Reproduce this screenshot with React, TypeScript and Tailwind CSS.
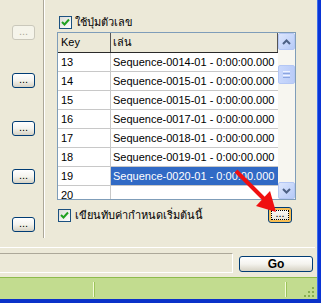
import React from 'react';

function DotsButton({ disabled }: { disabled?: boolean }) {
  return (
    <div
      className={`w-[23px] h-[15px] rounded-[3px] border flex items-end justify-center pb-[2px] text-[11px] leading-none ${
        disabled
          ? 'border-[#CAC8BB] text-[#ACA899] bg-[#F5F4EA]'
          : 'border-[#003C74] text-black bg-linear-to-b from-white via-[#F4F3EE] to-[#D6D2C4]'
      }`}
    >
      ...
    </div>
  );
}

function Check() {
  return (
    <div className="w-[13px] h-[13px] shrink-0 border border-[#1C5180] bg-linear-to-br from-[#DCDCD7] to-white flex items-center justify-center">
      <svg width="9" height="9" viewBox="0 0 9 9">
        <path d="M1 4 L3.5 6.5 L8 1.5" stroke="#21A121" strokeWidth="2" fill="none" />
      </svg>
    </div>
  );
}

function ScrollBtn({ up }: { up?: boolean }) {
  return (
    <div className="w-[17px] h-[17px] shrink-0 rounded-[2px] border border-[#B4C7F4] bg-linear-to-br from-[#DCE6FD] to-[#B6CAF7] flex items-center justify-center">
      <svg width="9" height="6" viewBox="0 0 9 6">
        <path d={up ? 'M1 5 L4.5 1.5 L8 5' : 'M1 1 L4.5 4.5 L8 1'} stroke="#4D6185" strokeWidth="2" fill="none" />
      </svg>
    </div>
  );
}

const rows = [
  { k: '13', v: 'Sequence-0014-01 - 0:00:00.000' },
  { k: '14', v: 'Sequence-0015-01 - 0:00:00.000' },
  { k: '15', v: 'Sequence-0015-01 - 0:00:00.000' },
  { k: '16', v: 'Sequence-0017-01 - 0:00:00.000' },
  { k: '17', v: 'Sequence-0018-01 - 0:00:00.000' },
  { k: '18', v: 'Sequence-0019-01 - 0:00:00.000' },
  { k: '19', v: 'Sequence-0020-01 - 0:00:00.000', sel: true },
  { k: '20', v: '' },
];

export default function App() {
  return (
    <div className="relative w-[321px] h-[303px] overflow-hidden bg-[#ECE9D8] text-[11px] text-black font-['Liberation_Sans','DejaVu_Sans',sans-serif] flex flex-col">
      <div className="flex flex-row h-[299px]">
        {/* main content */}
        <div className="w-[317px] flex flex-col">
          {/* top section */}
          <div className="h-[247px] flex flex-row">
            <div className="w-[43px] pl-[12px] pt-[25px] flex flex-col gap-[33px]">
              <DotsButton disabled />
              <DotsButton />
              <DotsButton />
              <DotsButton />
              <DotsButton />
            </div>
            <div className="w-[2px] h-[238px] border-l border-[#ACA899] bg-white" />
            <div className="flex-1 flex flex-col">
              <div className="pl-[14px] pt-[16px] flex items-center gap-[3px] h-[29px]">
                <Check />
                <span className="leading-none">ใช้ปุ่มตัวเลข</span>
              </div>
              <div className="ml-[12px] mt-[3px] w-[239px] h-[168px] border border-[#7F9DB9] bg-white flex flex-row">
                <div className="w-[220px] flex flex-col overflow-hidden">
                  <div className="h-[20px] shrink-0 flex flex-row bg-[#ECE9D8] border-b border-[#2A2A2A]">
                    <div className="w-[53px] border-r border-[#555] pl-[3px] flex items-center">Key</div>
                    <div className="flex-1 pl-[2px] flex items-center border-r border-[#555]">เล่น</div>
                  </div>
                  {rows.map((r) => (
                    <div key={r.k} className="h-[19px] shrink-0 flex flex-row border-b border-[#C8C8C8]">
                      <div className="w-[53px] border-r border-[#C8C8C8] pl-[3px] flex items-center">{r.k}</div>
                      <div
                        className={`flex-1 pl-[2px] flex items-center whitespace-nowrap ${
                          r.sel ? 'bg-[#316AC5] text-white' : ''
                        }`}
                      >
                        {r.v}
                      </div>
                    </div>
                  ))}
                </div>
                <div className="w-[17px] flex flex-col bg-[#F7F6F0]">
                  <ScrollBtn up />
                  <div className="flex-1 pt-[15px]">
                    <div className="h-[19px] rounded-[2px] border border-[#B4C7F4] bg-linear-to-r from-[#C9D8FC] to-[#BACCF8] flex flex-col items-center justify-center gap-[1px]">
                      <div className="w-[7px] h-px bg-[#EEF3FE]" />
                      <div className="w-[7px] h-px bg-[#8CA6E0]" />
                      <div className="w-[7px] h-px bg-[#EEF3FE]" />
                      <div className="w-[7px] h-px bg-[#8CA6E0]" />
                    </div>
                  </div>
                  <ScrollBtn />
                </div>
              </div>
              <div className="mt-[7px] pl-[13px] flex flex-row items-center h-[16px]">
                <Check />
                <span className="ml-[4px] leading-none">เขียนทับค่ากำหนดเริ่มต้นนี้</span>
                <div className="ml-auto mr-[25px] w-[24px] h-[16px] rounded-[3px] border border-[#003C74] bg-linear-to-b from-white to-[#E3E0D3] shadow-[inset_0_0_0_2px_#F6BE55] p-[2px]">
                  <div className="w-full h-full border border-dotted border-black flex items-end justify-center leading-none text-[11px]">
                    ...
                  </div>
                </div>
              </div>
            </div>
          </div>
          <div className="h-px bg-white mr-[2px]" />
          <div className="h-[5px]" />
          <div className="h-[20px] flex flex-row">
            <div className="w-[233px] h-[20px] border-t border-[#ACA899] border-r border-b border-r-white border-b-white" />
            <div className="ml-[6px] mt-[3px] w-[74px] h-[16px] rounded-[3px] border border-[#003C74] bg-linear-to-b from-white via-[#F4F3EE] to-[#D6D2C4] flex items-center justify-center font-bold text-[12px] leading-none">
              Go
            </div>
          </div>
          <div className="h-[4px]" />
          <div className="h-[22px] bg-[#C2DC8F] border-t border-[#8DBB4C] relative flex flex-row">
            <div className="ml-[93px] mt-[4px] h-[15px] w-[2px] border-l border-[#F4FAD8] bg-[#9CC45A]" />
            <div className="ml-[190px] mt-[4px] h-[15px] w-[2px] border-l border-[#F4FAD8] bg-[#9CC45A]" />
            <div className="absolute right-[3px] bottom-[2px] w-[10px] h-[10px]">
              <svg width="10" height="10" viewBox="0 0 10 10">
                <g fill="#86AD50">
                  <rect x="8" y="0" width="2" height="2" />
                  <rect x="4" y="4" width="2" height="2" />
                  <rect x="8" y="4" width="2" height="2" />
                  <rect x="0" y="8" width="2" height="2" />
                  <rect x="4" y="8" width="2" height="2" />
                  <rect x="8" y="8" width="2" height="2" />
                </g>
              </svg>
            </div>
          </div>
        </div>
        <div className="w-[4px] bg-[#0A35D6] border-l border-[#3C6CEB]" />
      </div>
      <div className="h-[4px] bg-[#0B32C9]" />

      {/* red annotation arrow */}
      <svg className="absolute left-0 top-0 pointer-events-none" width="321" height="303" viewBox="0 0 321 303">
        <line x1="236" y1="171" x2="265" y2="200" stroke="#F01010" strokeWidth="4" />
        <polygon points="276,212 256,206 270,191" fill="#F01010" />
      </svg>
    </div>
  );
}
